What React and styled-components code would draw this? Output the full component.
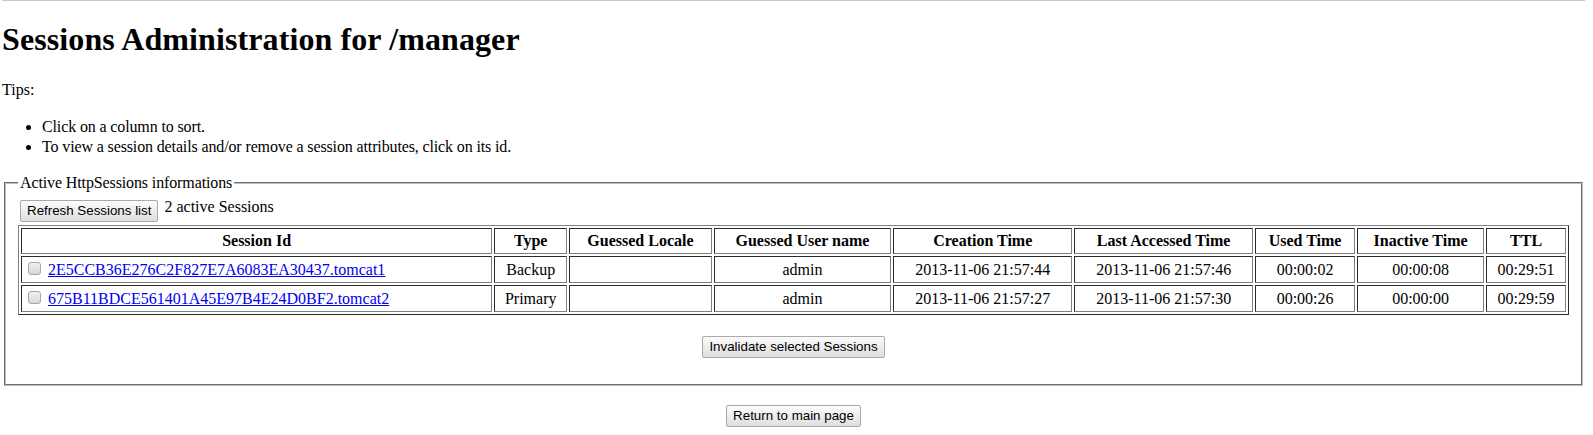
import React from "react";
import styled, { createGlobalStyle } from "styled-components";

const Global = createGlobalStyle`
  html, body { background: #fff; }
  body {
    margin: 0 8px 0 2px;
    font-family: "Liberation Serif", "Times New Roman", serif;
    font-size: 16px;
    line-height: 20px;
    color: #000;
  }
`;

const TopRule = styled.div`
  height: 1px;
  background: #c8c8c8;
  margin: 0 -8px 0 -2px;
`;

const Title = styled.h1`
  font-size: 32px;
  line-height: 37px;
  font-weight: bold;
  letter-spacing: 0.1px;
  margin: 20px 0 22px;
`;

const Para = styled.p`
  margin: ${(p) => p.$margin || "16px 0"};
  text-align: ${(p) => (p.$center ? "center" : "left")};
`;

const Tips = styled.ul`
  margin: 17px 0 16px;
  padding-left: 40px;
  letter-spacing: -0.13px;
`;

const Fieldset = styled.fieldset`
  margin: 0 2px;
  padding: 4px 12px 10px;
  border: 2px groove #c0c0c0;
`;

const Legend = styled.legend`
  padding: 0 2px;
  letter-spacing: -0.12px;
`;

const Button = styled.button`
  font-family: "Liberation Sans", Arial, sans-serif;
  font-size: 13.33px;
  line-height: 16px;
  color: #000;
  padding: 2px 6px 2px;
  border: 1px solid #a9a9a9;
  border-radius: 2px;
  background: linear-gradient(#fcfcfc, #dedede);
  margin: 0 2px;
  vertical-align: -3px;
`;

const Table = styled.table`
  width: 100%;
  margin-top: 3px;
  border: 1px outset #808080;
  border-spacing: 2px;
`;

const Th = styled.th`
  border: 1px inset #808080;
  padding: 2px;
  font-weight: bold;
  text-align: center;
`;

const Td = styled.td`
  border: 1px inset #808080;
  padding: 2px;
  text-align: ${(p) => (p.$left ? "left" : "center")};
`;

const Check = styled.input.attrs({ type: "checkbox" })`
  appearance: none;
  width: 13px;
  height: 13px;
  margin: 3px 3px 3px 4px;
  border: 1px solid #a6a6a6;
  border-radius: 3px;
  background: linear-gradient(#f0f0f0, #d8d8d8);
  vertical-align: -3px;
`;

const Link = styled.a`
  color: #0000ee;
  text-decoration: underline;
`;

const columns = [
  "Session Id",
  "Type",
  "Guessed Locale",
  "Guessed User name",
  "Creation Time",
  "Last Accessed Time",
  "Used Time",
  "Inactive Time",
  "TTL",
];

const sessions = [
  {
    id: "2E5CCB36E276C2F827E7A6083EA30437.tomcat1",
    type: "Backup",
    locale: "",
    user: "admin",
    created: "2013-11-06 21:57:44",
    accessed: "2013-11-06 21:57:46",
    used: "00:00:02",
    inactive: "00:00:08",
    ttl: "00:29:51",
  },
  {
    id: "675B11BDCE561401A45E97B4E24D0BF2.tomcat2",
    type: "Primary",
    locale: "",
    user: "admin",
    created: "2013-11-06 21:57:27",
    accessed: "2013-11-06 21:57:30",
    used: "00:00:26",
    inactive: "00:00:00",
    ttl: "00:29:59",
  },
];

export default function App() {
  return (
    <>
      <Global />
      <TopRule />
      <Title>Sessions Administration for /manager</Title>
      <Para $margin="16px 0 17px">Tips:</Para>
      <Tips>
        <li>Click on a column to sort.</li>
        <li>To view a session details and/or remove a session attributes, click on its id.</li>
      </Tips>
      <form onSubmit={(e) => e.preventDefault()}>
        <Fieldset>
          <Legend>Active HttpSessions informations</Legend>
          <Button type="button">Refresh Sessions list</Button> 2 active Sessions
          <br />
          <Table>
            <thead>
              <tr>
                {columns.map((c) => (
                  <Th key={c}>{c}</Th>
                ))}
              </tr>
            </thead>
            <tbody>
              {sessions.map((s) => (
                <tr key={s.id}>
                  <Td $left>
                    <Check /> <Link href="#">{s.id}</Link>
                  </Td>
                  <Td>{s.type}</Td>
                  <Td>{s.locale}</Td>
                  <Td>{s.user}</Td>
                  <Td>{s.created}</Td>
                  <Td>{s.accessed}</Td>
                  <Td>{s.used}</Td>
                  <Td>{s.inactive}</Td>
                  <Td>{s.ttl}</Td>
                </tr>
              ))}
            </tbody>
          </Table>
          <Para $center $margin="18px 0 16px">
            <Button type="button">Invalidate selected Sessions</Button>
          </Para>
        </Fieldset>
      </form>
      <Para $center $margin="16px 0">
        <Button type="button">Return to main page</Button>
      </Para>
    </>
  );
}
